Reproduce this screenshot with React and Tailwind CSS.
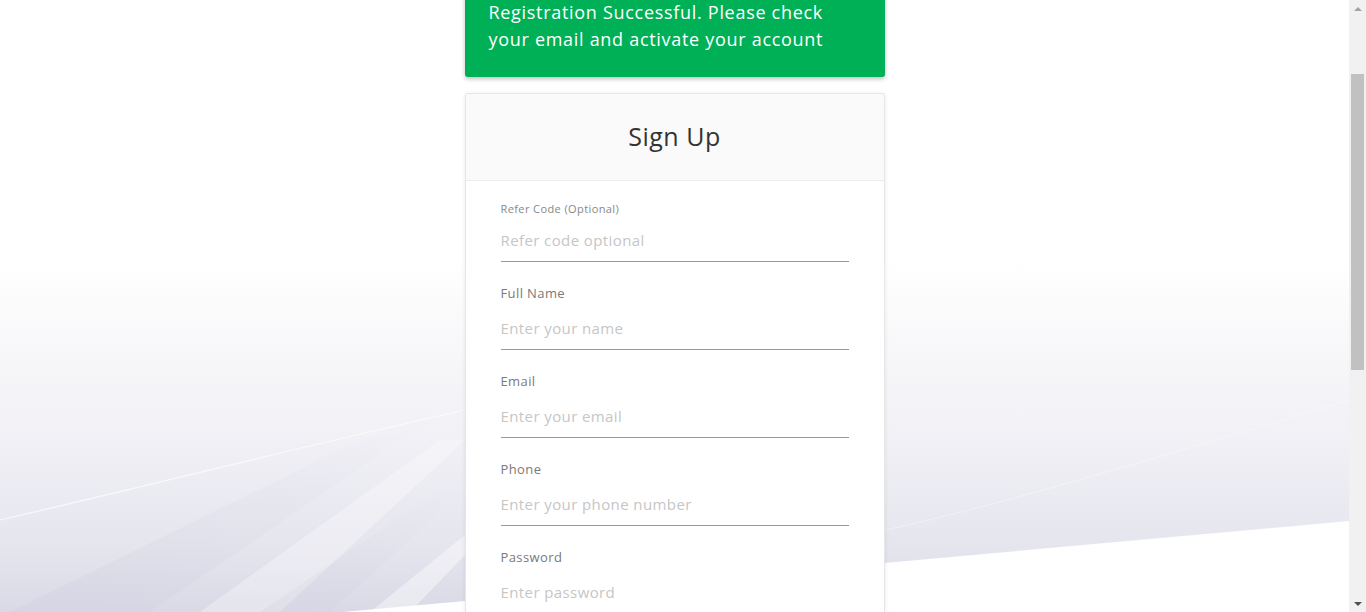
import React from 'react';

const fields = [
  { label: 'Refer Code (Optional)', placeholder: 'Refer code optional', small: true },
  { label: 'Full Name', placeholder: 'Enter your name' },
  { label: 'Email', placeholder: 'Enter your email' },
  { label: 'Phone', placeholder: 'Enter your phone number' },
  { label: 'Password', placeholder: 'Enter password', type: 'password' },
];

function Backdrop() {
  return (
    <svg
      className="absolute inset-0 w-full h-full"
      viewBox="0 0 1349 612"
      preserveAspectRatio="none"
    >
      <defs>
        <linearGradient id="wash" x1="0" y1="0" x2="0" y2="1">
          <stop offset="0" stopColor="#ffffff" />
          <stop offset="0.12" stopColor="#fbfbfc" />
          <stop offset="0.45" stopColor="#f1f1f6" />
          <stop offset="0.75" stopColor="#e5e5ee" />
          <stop offset="1" stopColor="#d4d4e3" />
        </linearGradient>
        <linearGradient id="streak" x1="0" y1="1" x2="1" y2="0">
          <stop offset="0" stopColor="#c9c9dc" stopOpacity="0.6" />
          <stop offset="1" stopColor="#c9c9dc" stopOpacity="0" />
        </linearGradient>
      </defs>
      <polygon points="0,262 1349,262 1349,521 0,643" fill="url(#wash)" />
      <polygon points="10,612 150,612 430,420 360,440" fill="url(#streak)" opacity="0.45" />
      <polygon points="200,612 280,612 465,440 440,440" fill="#ffffff" opacity="0.3" />
      <polygon points="260,612 330,612 465,490 440,490" fill="url(#streak)" opacity="0.35" />
      <polygon points="370,612 410,612 465,555 465,535" fill="#ffffff" opacity="0.4" />
      <path d="M0 520 C150 485 330 440 465 410" stroke="#ffffff" strokeWidth="1.2" fill="none" opacity="0.7" />
      <path d="M885 530 C1000 505 1150 460 1349 400" stroke="#ffffff" strokeWidth="1" fill="none" opacity="0.35" />
    </svg>
  );
}

function Field({ label, placeholder, small, type = 'text' }) {
  return (
    <div className="mb-[21px]">
      <label
        className={
          small
            ? 'block mb-px text-[11px] leading-4 tracking-[0.4px] text-[#888]'
            : 'block mb-[3px] text-[13px] leading-5 tracking-[0.4px] text-[#7a7a7a]'
        }
      >
        {label}
      </label>
      <input
        type={type}
        placeholder={placeholder}
        className="block w-full h-11 text-[15px] tracking-[0.4px] text-[#444] placeholder:text-[#c6c6c6] border-b border-[#999] outline-none bg-transparent"
      />
    </div>
  );
}

export default function App() {
  return (
    <div
      className="flex h-[612px] w-full overflow-hidden bg-white"
      style={{ fontFamily: '"Open Sans", "Noto Sans", sans-serif' }}
    >
      <div className="relative flex-1 h-full">
        <Backdrop />
        <div className="relative flex flex-col items-center">
          <div className="w-[420px] mt-[-25px] bg-[#00b057] text-white text-[18px] leading-[27px] tracking-[0.7px] px-6 pt-6 pb-6 rounded-[3px] shadow-[0_2px_4px_rgba(0,0,0,0.25)]">
            Registration Successful. Please check
            <br />
            your email and activate your account
          </div>
          <div className="w-[420px] mt-4 bg-white border border-[#e6e6e6] rounded-[2px] shadow-[0_1px_5px_rgba(0,0,0,0.08)]">
            <div className="h-[87px] flex items-center justify-center bg-[#fafafa] border-b border-[#ececec]">
              <h1 className="text-[25px] tracking-[0.5px] text-[#333]">Sign Up</h1>
            </div>
            <form className="px-[35px] pt-5">
              {fields.map((f) => (
                <Field key={f.label} {...f} />
              ))}
            </form>
          </div>
        </div>
      </div>
      <div className="w-[17px] h-full bg-[#f1f1f1] flex flex-col items-center">
        <div className="h-[17px] flex items-center justify-center">
          <div className="w-0 h-0 border-x-[4px] border-x-transparent border-b-[4px] border-b-[#a3a3a3]" />
        </div>
        <div className="mt-[57px] w-[13px] h-[296px] bg-[#c1c1c1]" />
        <div className="flex-1" />
        <div className="h-[17px] flex items-center justify-center">
          <div className="w-0 h-0 border-x-[4px] border-x-transparent border-t-[4px] border-t-[#505050]" />
        </div>
      </div>
    </div>
  );
}
